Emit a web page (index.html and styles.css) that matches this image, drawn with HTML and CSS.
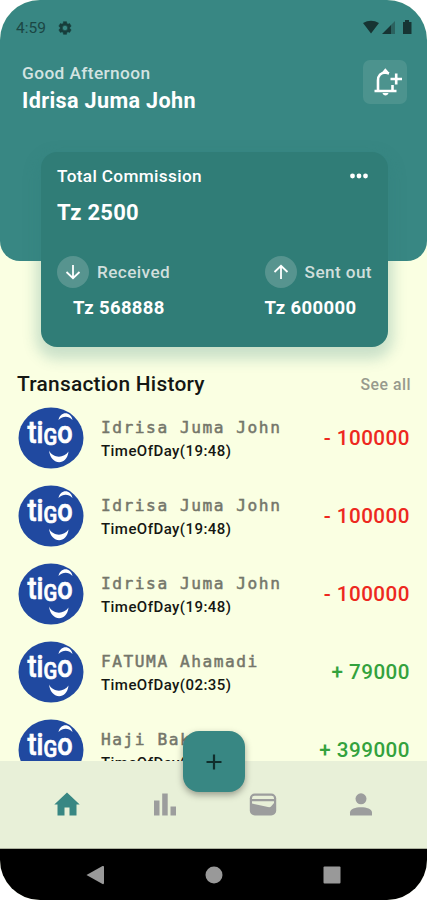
FILE: index.html
```
<!DOCTYPE html>
<html lang="en">
<head>
<meta charset="utf-8">
<title>Commission wallet</title>
<link rel="stylesheet" href="styles.css">
</head>
<body>
<div class="phone">
  <header class="header">
    <div class="status">
      <span class="clock">4:59</span>
      <svg class="gear" width="16" height="16" viewBox="0 0 24 24"><path fill="#173d3b" fill-rule="evenodd" stroke="#173d3b" stroke-width=".8" d="M19.1 13a7 7 0 0 0 0-2l2.1-1.7-2.3-4-2.5 1a7 7 0 0 0-1.7-1L14.300 2.500H9.700L9.300 5.300a7 7 0 0 0-1.700 1l-2.500-1-2.300 4L4.900 11a7 7 0 0 0 0 2l-2.100 1.700 2.300 4 2.500-1a7 7 0 0 0 1.700 1l.4 2.800h4.600l.4-2.800a7 7 0 0 0 1.700-1l2.500 1 2.300-4zM12 16a4 4 0 1 1 0-8 4 4 0 0 1 0 8z"/></svg>
      <svg class="signals" width="50" height="15" viewBox="0 0 50 15"><path fill="#173433" d="M0 3Q8-1.500 16 3L8 13.500zM19 14L28 5v9z"/><path fill="#2b625f" d="M28 5l4-4v13h-4z"/><path fill="#173433" d="M40 2h2V0h4v2h2.500v12H40z"/></svg>
    </div>
    <div class="greeting">
      <div>
        <p class="hello">Good Afternoon</p>
        <h1 class="user">Idrisa Juma John</h1>
      </div>
      <div class="bell">
        <svg width="30" height="30" viewBox="0 0 30 30" fill="none" stroke="#fff" stroke-width="2.600"><path d="M2.500 24H24.500M6 24V13.500C6 8.500 9 5.500 13.500 5.500L17 6.500M20.500 18V24"/><path d="M24.200 6.500V17.500M18.500 12H30"/><path fill="#fff" stroke="none" d="M9.500 6L13.300 1.300L17.500 6zM10.500 26h6c-.5 3.200-5.500 3.200-6 0z"/></svg>
      </div>
    </div>
  </header>

  <section class="card">
    <div class="card-head"><span class="label">Total Commission</span>
      <svg width="18" height="6" viewBox="0 0 18 6" fill="#fff"><circle cx="2.500" cy="3" r="2.400"/><circle cx="9" cy="3" r="2.400"/><circle cx="15.500" cy="3" r="2.400"/></svg>
    </div>
    <p class="total">Tz 2500</p>
    <div class="flows">
      <div class="flow">
        <div class="flow-head"><span class="disc"><svg width="16" height="16" viewBox="0 0 16 16" fill="none" stroke="#fff" stroke-width="1.800"><path d="M8 1V14M1.500 8L8 14.200L14.500 8"/></svg></span><span class="flow-name">Received</span></div>
        <p class="sum inset">Tz 568888</p>
      </div>
      <div class="flow">
        <div class="flow-head"><span class="disc"><svg width="16" height="16" viewBox="0 0 16 16" fill="none" stroke="#fff" stroke-width="1.800"><path d="M8 15V2M1.500 8L8 1.800L14.500 8"/></svg></span><span class="flow-name">Sent out</span></div>
        <p class="sum">Tz 600000</p>
      </div>
    </div>
  </section>

  <main class="history">
    <div class="history-head"><h2 class="title">Transaction History</h2><span class="all">See all</span></div>
    <div class="row">
      <svg class="logo" viewBox="0 0 66 62"><ellipse class="blue" cx="33" cy="31" rx="32.500" ry="30.500"/><text x="9.500" y="36" textLength="45" lengthAdjust="spacingAndGlyphs">ti<tspan class="mid" dy="2">G</tspan><tspan dy="-2">o</tspan></text><path d="M40.500 13C42 4 53 4 54.500 13C50 8.500 45 9 40.500 13ZM31 43.500C35 51.500 46 51.500 50.500 44.500C49 59 33 59 31 43.500Z"/></svg>
      <div class="who"><p class="name">Idrisa Juma John</p><p class="time">TimeOfDay(19:48)</p></div><span class="amount out">- 100000</span></div>
    <div class="row">
      <svg class="logo" viewBox="0 0 66 62"><ellipse class="blue" cx="33" cy="31" rx="32.500" ry="30.500"/><text x="9.500" y="36" textLength="45" lengthAdjust="spacingAndGlyphs">ti<tspan class="mid" dy="2">G</tspan><tspan dy="-2">o</tspan></text><path d="M40.500 13C42 4 53 4 54.500 13C50 8.500 45 9 40.500 13ZM31 43.500C35 51.500 46 51.500 50.500 44.500C49 59 33 59 31 43.500Z"/></svg>
      <div class="who"><p class="name">Idrisa Juma John</p><p class="time">TimeOfDay(19:48)</p></div><span class="amount out">- 100000</span></div>
    <div class="row">
      <svg class="logo" viewBox="0 0 66 62"><ellipse class="blue" cx="33" cy="31" rx="32.500" ry="30.500"/><text x="9.500" y="36" textLength="45" lengthAdjust="spacingAndGlyphs">ti<tspan class="mid" dy="2">G</tspan><tspan dy="-2">o</tspan></text><path d="M40.500 13C42 4 53 4 54.500 13C50 8.500 45 9 40.500 13ZM31 43.500C35 51.500 46 51.500 50.500 44.500C49 59 33 59 31 43.500Z"/></svg>
      <div class="who"><p class="name">Idrisa Juma John</p><p class="time">TimeOfDay(19:48)</p></div><span class="amount out">- 100000</span></div>
    <div class="row">
      <svg class="logo" viewBox="0 0 66 62"><ellipse class="blue" cx="33" cy="31" rx="32.500" ry="30.500"/><text x="9.500" y="36" textLength="45" lengthAdjust="spacingAndGlyphs">ti<tspan class="mid" dy="2">G</tspan><tspan dy="-2">o</tspan></text><path d="M40.500 13C42 4 53 4 54.500 13C50 8.500 45 9 40.500 13ZM31 43.500C35 51.500 46 51.500 50.500 44.500C49 59 33 59 31 43.500Z"/></svg>
      <div class="who"><p class="name">FATUMA Ahamadi</p><p class="time">TimeOfDay(02:35)</p></div><span class="amount in">+ 79000</span></div>
    <div class="row">
      <svg class="logo" viewBox="0 0 66 62"><ellipse class="blue" cx="33" cy="31" rx="32.500" ry="30.500"/><text x="9.500" y="36" textLength="45" lengthAdjust="spacingAndGlyphs">ti<tspan class="mid" dy="2">G</tspan><tspan dy="-2">o</tspan></text><path d="M40.500 13C42 4 53 4 54.500 13C50 8.500 45 9 40.500 13ZM31 43.500C35 51.500 46 51.500 50.500 44.500C49 59 33 59 31 43.500Z"/></svg>
      <div class="who"><p class="name">Haji Bak</p><p class="time">TimeOfDay(</p></div><span class="amount in">+ 399000</span></div>
  </main>

  <nav class="tabs">
    <svg width="28" height="28" viewBox="0 0 28 28"><path fill="#388783" d="M14 2.500L1.300 14.500H4.500V25.500H11.500V17.500H16.500V25.500H23.500V14.500H26.700z"/></svg>
    <svg width="28" height="28" viewBox="0 0 28 28" fill="#9c9d9d"><path d="M3 10.500h5.500v15H3zM11.200 3.500h5.500v22h-5.500zM19.500 16.500H25v9h-5.500z"/></svg>
    <svg width="28" height="28" viewBox="0 0 28 28"><rect x=".8" y="3.500" width="26.400" height="22" rx="5" fill="#9c9d9d"/><path fill="#e8f0d8" d="M3 8.200Q3 5.800 5.500 5.800H22.500Q25 5.800 25 8.200V9H3zM3 11.300H25V13L22 16.500Q21 17.500 19 17L3 13.500z"/></svg>
    <svg width="28" height="28" viewBox="0 0 28 28" fill="#9c9d9d"><circle cx="14" cy="8.800" r="5.500"/><path d="M3 25.500V22.500C3 15.500 25 15.500 25 22.500V25.500z"/></svg>
  </nav>
  <button class="add" aria-label="Add"><svg width="16" height="16" viewBox="0 0 16 16"><path d="M8 .5V15.500M.5 8H15.500" stroke="#102e2c" stroke-width="2.200"/></svg></button>

  <footer class="system">
    <svg width="18" height="20" viewBox="0 0 18 20"><path fill="#999" d="M16.500 1Q18 .5 18 2V18Q18 19.500 16.500 19L.5 10z"/></svg>
    <svg width="18" height="18" viewBox="0 0 18 18"><circle cx="9" cy="9" r="8.500" fill="#999"/></svg>
    <svg width="18" height="18" viewBox="0 0 18 18"><rect x=".5" y=".5" width="17" height="17" rx="1" fill="#999"/></svg>
  </footer>
</div>
</body>
</html>
```
FILE: styles.css
```
* { box-sizing: border-box; margin: 0; padding: 0; }
body { background: #fff; font-family: Roboto, sans-serif; }
svg { display: block; flex: none; }
.phone {
  position: relative;
  display: flex;
  flex-direction: column;
  width: 427px;
  height: 900px;
  overflow: hidden;
  border-radius: 40px;
  background: #faffe2;
  white-space: nowrap;
}
.header { height: 261px; flex: none; background: #388783; border-radius: 0 0 20px 20px; }
.status { display: flex; align-items: center; height: 54px; padding: 1px 14px 0 16px; }
.clock { width: 41px; font-size: 15.500px; color: #1b4643; }
.signals { margin-left: auto; }
.greeting { display: flex; justify-content: space-between; padding: 6px 20px 0 22px; }
.hello { margin-top: 3px; font-size: 17.300px; line-height: 20px; font-weight: 500; letter-spacing: .4px; color: #d3e3e1; }
.user { margin-top: 5px; font-size: 21.600px; line-height: 26px; font-weight: 700; letter-spacing: .35px; color: #fff; }
.bell { display: grid; place-items: center; width: 44px; height: 44px; border-radius: 7px; background: #4c938e; }
.bell svg { margin-left: 3px; }
.card {
  position: relative;
  flex: none;
  width: 347px;
  height: 195px;
  margin: -109px 0 0 41px;
  padding: 14px 16px;
  border-radius: 16px;
  background: #307d77;
  box-shadow: 0 7px 14px 5px rgba(47, 125, 121, .24);
  color: #fff;
}
.card-head { display: flex; justify-content: space-between; align-items: center; height: 20px; padding-right: 4px; }
.label { font-size: 17.200px; font-weight: 500; letter-spacing: .35px; }
.total { margin-top: 14px; font-size: 22px; line-height: 26px; font-weight: 700; letter-spacing: .25px; }
.flows { display: flex; justify-content: space-between; margin-top: 29px; }
.flow-head { display: flex; align-items: center; height: 33px; gap: 8px; }
.disc { display: grid; place-items: center; width: 32px; height: 32px; border-radius: 50%; background: #57948f; }
.flow-name { font-size: 17.200px; font-weight: 500; letter-spacing: .4px; color: #d0dfdc; }
.sum { margin-top: 8px; font-size: 18.500px; line-height: 24px; font-weight: 700; letter-spacing: .35px; }
.inset { margin-left: 16px; }
.history { height: 414px; flex: none; overflow: hidden; padding: 23px 16px 0 17px; }
.history-head { display: flex; justify-content: space-between; align-items: center; height: 28px; }
.title { font-size: 20.900px; font-weight: 500; letter-spacing: .25px; color: #151713; }
.all { font-size: 15.800px; font-weight: 500; letter-spacing: .5px; color: #979a8d; }
.row { display: flex; align-items: center; height: 78px; padding-bottom: 8px; margin-right: 1px; }
.history-head + .row { margin-top: 5px; }
.logo { width: 66px; height: 62px; margin: -1px .5px 0 .5px; fill: #fff; }
.logo .blue { fill: #2049a0; }
.logo text { font-family: Roboto, sans-serif; font-size: 31px; font-weight: 500; stroke: #fff; stroke-width: .7px; }
.logo .mid { font-size: 23px; }
.who { height: 54px; padding: 4px 0 0 17px; }
.name { font-family: "DejaVu Sans Mono", monospace; font-size: 16.200px; line-height: 25px; letter-spacing: 1.530px; color: #74766a; -webkit-text-stroke: .5px #74766a; }
.time { font-size: 15px; line-height: 22px; font-weight: 500; letter-spacing: .45px; color: #151713; }
.amount { margin-left: auto; font-size: 20.600px; font-weight: 500; letter-spacing: .5px; }
.out { color: #ed2820; }
.in { color: #33a23d; }
.tabs { display: flex; justify-content: space-between; height: 88px; flex: none; padding: 29px 52px 0 53px; background: #e8f0d8; border-bottom: 1px solid #adb29f; }
.add {
  position: absolute;
  left: 183px;
  top: 731px;
  display: grid;
  place-items: center;
  width: 62px;
  height: 61px;
  border: 0;
  border-radius: 16px;
  background: #388783;
  box-shadow: 0 3px 7px rgba(0, 0, 0, .35);
}
.system { display: flex; justify-content: space-between; align-items: center; flex: 1; padding: 0 86px; background: #000; }
```
